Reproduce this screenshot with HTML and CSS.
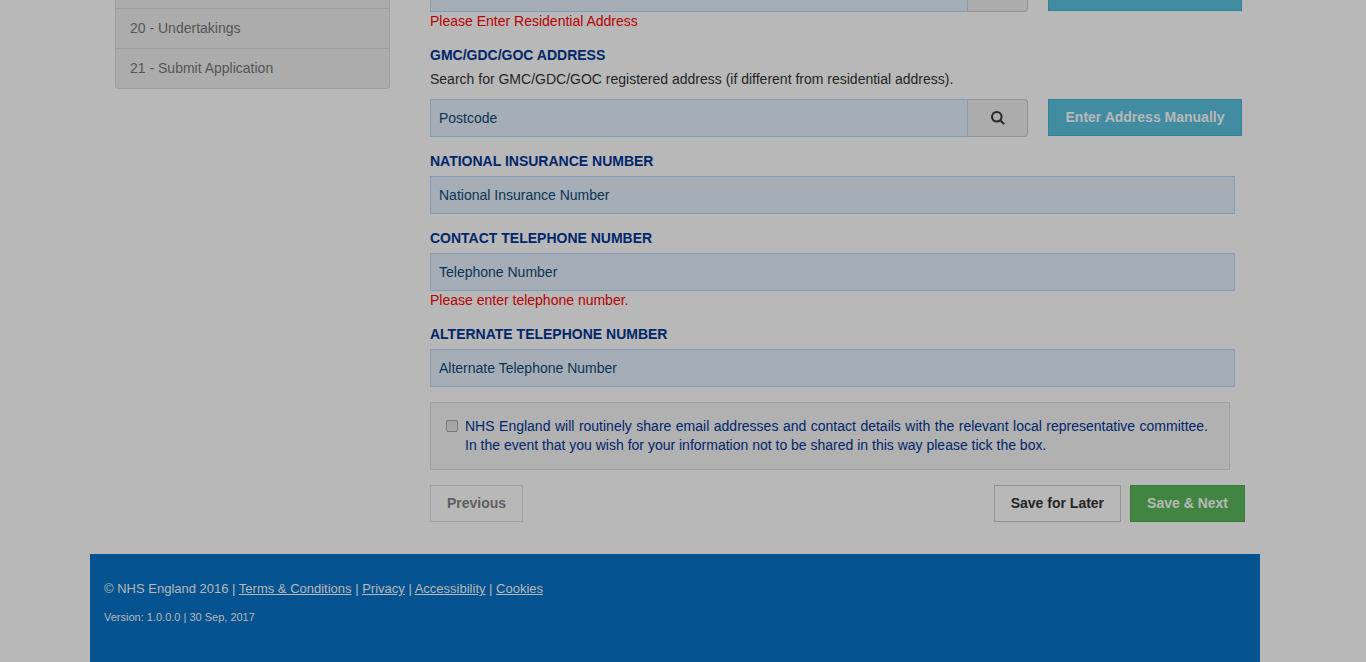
FILE: index.html
```
<!DOCTYPE html>
<html lang="en">
<head>
<meta charset="utf-8">
<title>NHS England - Application</title>
<link rel="stylesheet" href="styles.css">
</head>
<body>
<div class="page">
  <div class="columns">
    <nav class="steps" aria-label="Application steps">
      <a class="step" href="#" aria-label="Step 19"></a>
      <a class="step" href="#">20 - Undertakings</a>
      <a class="step" href="#">21 - Submit Application</a>
    </nav>
    <form class="form">
      <div class="group">
        <div class="search-row">
          <div class="search">
            <input class="field" type="text" aria-label="Residential address">
            <button class="search-btn" type="button" aria-label="Search residential address"></button>
          </div>
          <button class="btn btn-info" type="button" aria-label="Residential address, manual entry"></button>
        </div>
        <p class="error">Please Enter Residential Address</p>
      </div>
      <div class="group">
        <label class="label" for="postcode">GMC/GDC/GOC ADDRESS</label>
        <p class="hint">Search for GMC/GDC/GOC registered address (if different from residential address).</p>
        <div class="search-row">
          <div class="search">
            <input class="field" id="postcode" type="text" placeholder="Postcode">
            <button class="search-btn" type="button" aria-label="Search">
              <svg class="icon" viewBox="0 0 14 14" aria-hidden="true"><circle cx="5.8" cy="5.8" r="4.8"/><path d="M9.4 9.4L12.6 12.6"/></svg>
            </button>
          </div>
          <button class="btn btn-info" type="button">Enter Address Manually</button>
        </div>
      </div>
      <div class="group">
        <label class="label" for="ni">NATIONAL INSURANCE NUMBER</label>
        <input class="field" id="ni" type="text" placeholder="National Insurance Number">
      </div>
      <div class="group">
        <label class="label" for="tel">CONTACT TELEPHONE NUMBER</label>
        <input class="field" id="tel" type="tel" placeholder="Telephone Number">
        <p class="error">Please enter telephone number.</p>
      </div>
      <div class="group">
        <label class="label" for="alt">ALTERNATE TELEPHONE NUMBER</label>
        <input class="field" id="alt" type="tel" placeholder="Alternate Telephone Number">
      </div>
      <div class="notice">
        <input class="check" id="share" type="checkbox">
        <label class="notice-text" for="share">NHS England will routinely share email addresses and contact details with the relevant local representative committee. In the event that you wish for your information not to be shared in this way please tick the box.</label>
      </div>
      <div class="actions">
        <button class="btn btn-muted" type="button">Previous</button>
        <button class="btn btn-plain" type="button">Save for Later</button>
        <button class="btn btn-success" type="submit">Save &amp; Next</button>
      </div>
    </form>
  </div>
  <footer class="footer">
    <p class="legal">© NHS England 2016 | <a href="#">Terms &amp; Conditions</a> | <a href="#">Privacy</a> | <a href="#">Accessibility</a> | <a href="#">Cookies</a></p>
    <p class="version">Version: 1.0.0.0 | 30 Sep, 2017</p>
  </footer>
</div>
</body>
</html>
```
FILE: styles.css
```
* { box-sizing: border-box; }

html { height: 100%; overflow: hidden; background: #b8b8b8; }

body {
  margin: 0;
  height: 100%;
  padding-right: 16px;
  overflow: hidden;
  font: 14px/20px "Liberation Sans", Arial, sans-serif;
  color: #252525;
}

p { margin: 0; }

button, input { font: inherit; }

.page {
  display: flex;
  flex-direction: column;
  max-width: 1170px;
  min-height: 100%;
  margin: 0 auto;
}

/* The page is scrolled: its first rows start above the window. */
.columns {
  display: flex;
  align-items: flex-start;
  gap: 40px;
  margin-top: -32px;
  padding: 0 15px 32px 25px;
}

.steps {
  flex: 0 0 275px;
  background: #acacac;
  border: 1px solid #9f9f9f;
  border-top: 0;
  border-radius: 0 0 4px 4px;
}

.step {
  display: block;
  height: 40px;
  padding: 9px 14px;
  color: #555;
  text-decoration: none;
}

.step + .step { border-top: 1px solid #9f9f9f; }

.form { flex: 1; min-width: 0; padding-top: 6px; }

.group { margin-right: 10px; }
.group + .group { margin-top: 14px; }

.label {
  display: block;
  margin-bottom: 5px;
  font-weight: bold;
  color: #00266a;
}

.hint { margin-bottom: 10px; line-height: 19px; }

.error { line-height: 19px; color: #b80000; }

.field {
  display: block;
  width: 100%;
  height: 38px;
  padding: 0 8px;
  background: #a5aeb6;
  border: 1px solid #849db4;
  border-radius: 0;
  color: #0c3354;
}

.field::placeholder { color: #0c3354; opacity: 1; }

.search-row {
  display: flex;
  align-items: flex-start;
  gap: 20px;
  margin-right: -7px;
}

.search { display: flex; flex: 1; }
.search .field { flex: 1; min-width: 0; }

.search-btn {
  display: flex;
  align-items: center;
  justify-content: center;
  width: 60px;
  height: 38px;
  padding: 0;
  background: #acacac;
  border: 1px solid #939393;
  border-left: 0;
  border-radius: 0 4px 4px 0;
}

.icon {
  width: 14px;
  height: 14px;
  fill: none;
  stroke: #252525;
  stroke-width: 2;
  stroke-linecap: round;
}

.btn {
  height: 37px;
  padding: 0 16px 2px;
  border: 1px solid;
  font-weight: bold;
}

.btn-info {
  width: 194px;
  background: #428ca2;
  border-color: #32839b;
  color: #b8b8b8;
}

.btn-muted { margin-right: auto; background: #b8b8b8; border-color: #a0a0a0; color: #5f5f5f; }
.btn-plain { background: #b8b8b8; border-color: #939393; color: #252525; }
.btn-success { background: #428542; border-color: #377b37; color: #b8b8b8; }

.notice {
  display: flex;
  align-items: flex-start;
  gap: 7px;
  margin: 15px 15px 15px 0;
  padding: 14px 21px 14px 15px;
  background: #b1b1b1;
  border: 1px solid #a0a0a0;
}

.check {
  flex: none;
  appearance: none;
  width: 12px;
  height: 12px;
  margin: 3px 0 0;
  background: linear-gradient(#a2a2a2, #acacac);
  border: 1px solid #787878;
  border-radius: 2px;
}

.check:checked { background: #00266a; }

.notice-text { flex: 1; line-height: 19px; text-align: justify; color: #00266a; }

.actions { display: flex; gap: 9px; }

.footer {
  flex: 1;
  padding: 25px 14px;
  background: #04528f;
  color: #b8b8b8;
}

.footer a { color: inherit; }
.legal { font-size: 13px; }
.version { margin-top: 8px; font-size: 11px; }
```
